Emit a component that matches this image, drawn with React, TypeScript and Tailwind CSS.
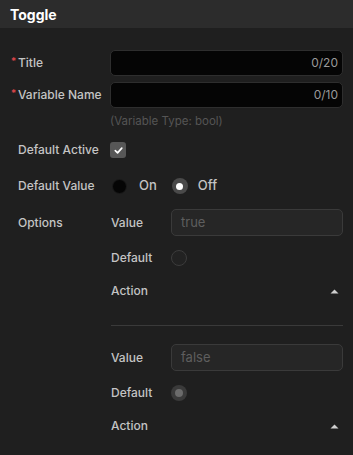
import React from 'react';

const font = { fontFamily: 'Inter, "Noto Sans", sans-serif' };

const Label = ({ text, required }: { text: string; required?: boolean }) => (
  <div className="relative w-[100px] shrink-0 pl-[8px] text-[12px] font-medium text-[#c4c4c4]">
    {required && <span className="absolute left-[1px] top-[0px] text-[10px] text-[#e5484d]">*</span>}
    {text}
  </div>
);

const Caret = () => (
  <svg width="9" height="5" viewBox="0 0 9 5" className="mr-[4px]">
    <path d="M0.5 4.5 L4.5 0.5 L8.5 4.5 Z" fill="#cfcfcf" />
  </svg>
);

const OptionBlock = ({ value, checked }: { value: string; checked?: boolean }) => (
  <div className="flex flex-col">
    <div className="flex h-[27px] items-center">
      <div className="w-[60px] text-[12px] font-medium text-[#c4c4c4]">Value</div>
      <div className="flex h-[27px] flex-1 items-center rounded-[5px] border border-[#3a3a3a] bg-[#262626] px-[9px] text-[13px] text-[#5e5e5e]">
        {value}
      </div>
    </div>
    <div className="mt-[10px] flex h-[24px] items-center">
      <div className="w-[60px] text-[12px] font-medium text-[#c4c4c4]">Default</div>
      {checked ? (
        <div className="flex h-[16px] w-[16px] items-center justify-center rounded-full bg-[#3a3a3a]">
          <div className="h-[8px] w-[8px] rounded-full bg-[#6b6b6b]" />
        </div>
      ) : (
        <div className="h-[16px] w-[16px] rounded-full border border-[#3c3c3c] bg-[#222]" />
      )}
    </div>
    <div className="mt-[9px] flex h-[24px] items-center justify-between">
      <div className="text-[12px] font-medium text-[#c4c4c4]">Action</div>
      <Caret />
    </div>
  </div>
);

export default function App() {
  return (
    <div className="h-[455px] w-[353px] overflow-hidden bg-[#1f1f1f]" style={font}>
      <div className="flex h-[28px] items-center bg-[#2c2c2c] px-[10px] text-[14px] font-bold text-white">
        Toggle
      </div>
      <div className="flex flex-col px-[10px] pt-[22px]">
        <div className="flex h-[26px] items-center">
          <Label text="Title" required />
          <div className="flex h-[26px] flex-1 items-center justify-end rounded-[5px] border border-[#2e2e2e] bg-[#050505] px-[4px] text-[12px] text-[#9a9a9a]">
            0/20
          </div>
        </div>
        <div className="mt-[6px] flex h-[26px] items-center">
          <Label text="Variable Name" required />
          <div className="flex h-[26px] flex-1 items-center justify-end rounded-[5px] border border-[#2e2e2e] bg-[#050505] px-[4px] text-[12px] text-[#9a9a9a]">
            0/10
          </div>
        </div>
        <div className="ml-[100px] mt-[5px] h-[16px] text-[11.5px] leading-[16px] text-[#555]">
          (Variable Type: bool)
        </div>
        <div className="mt-[9px] flex h-[24px] items-center">
          <Label text="Default Active" />
          <div className="flex h-[16px] w-[16px] items-center justify-center rounded-[3px] bg-[#575757]">
            <svg width="11" height="11" viewBox="0 0 12 12">
              <path d="M2.5 6.2 L5 8.6 L9.6 3.4" fill="none" stroke="#fff" strokeWidth="1.8" strokeLinecap="round" strokeLinejoin="round" />
            </svg>
          </div>
        </div>
        <div className="mt-[12px] flex h-[24px] items-center">
          <Label text="Default Value" />
          <div className="flex items-center">
            <div className="ml-[2px] h-[15px] w-[15px] rounded-full border border-[#1a1a1a] bg-[#050505]" />
            <span className="ml-[12px] text-[13px] font-medium text-[#c4c4c4]">On</span>
            <div className="ml-[15px] flex h-[16px] w-[16px] items-center justify-center rounded-full bg-[#4a4a4a]">
              <div className="h-[7px] w-[7px] rounded-full bg-white" />
            </div>
            <span className="ml-[10px] text-[13px] font-medium text-[#c4c4c4]">Off</span>
          </div>
        </div>
        <div className="mt-[11px] flex">
          <div className="flex h-[27px] items-center">
            <Label text="Options" />
          </div>
          <div className="flex flex-1 flex-col pl-[1px]">
            <OptionBlock value="true" />
            <div className="mb-[18px] mt-[22px] h-px bg-[#3a3a3a]" />
            <OptionBlock value="false" checked />
          </div>
        </div>
      </div>
    </div>
  );
}
